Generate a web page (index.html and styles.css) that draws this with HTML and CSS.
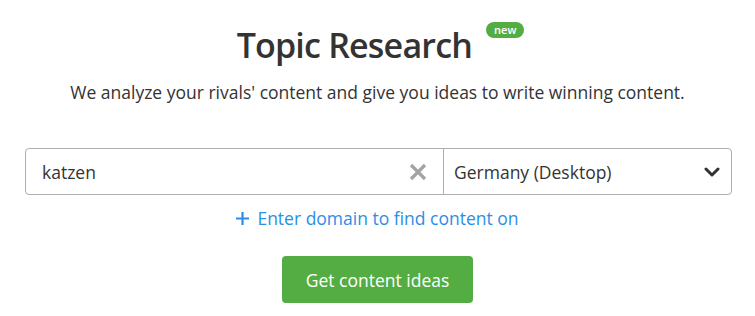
FILE: index.html
```html
<!DOCTYPE html>
<html>
<head>
<meta charset="utf-8">
<link rel="stylesheet" href="styles.css">
</head>
<body>
<main class="page">
  <div class="title-row">
    <h1 class="title">Topic Research</h1>
    <span class="badge">new</span>
  </div>
  <p class="subtitle">We analyze your rivals' content and give you ideas to write winning content.</p>
  <div class="search">
    <div class="field">
      <span class="query">katzen</span>
      <svg class="clear" width="18" height="18" viewBox="0 0 18 18"><path d="M2 2 L16 16 M16 2 L2 16" stroke="#a3a3a3" stroke-width="3.2" fill="none"/></svg>
    </div>
    <div class="select">
      <span class="db">Germany (Desktop)</span>
      <svg class="chev" width="16" height="10" viewBox="0 0 16 10"><path d="M2 2 L8 8 L14 2" stroke="#333" stroke-width="3" fill="none" stroke-linecap="round" stroke-linejoin="round"/></svg>
    </div>
  </div>
  <div class="domain">
    <svg class="plus" width="13" height="13" viewBox="0 0 13 13"><path d="M6.5 0 V13 M0 6.5 H13" stroke="#2b8ee6" stroke-width="2.2"/></svg>
    <span class="domain-text">Enter domain to find content on</span>
  </div>
  <button class="cta">Get content ideas</button>
</main>
</body>
</html>
```
FILE: styles.css
```css
html, body {
  margin: 0;
  padding: 0;
  background: #fff;
}
body {
  font-family: "Open Sans", "Noto Sans", sans-serif;
  color: #333;
}
.page {
  width: 755px;
  display: flex;
  flex-direction: column;
  align-items: center;
}
.title-row {
  margin-top: 22px;
  height: 46px;
  display: flex;
  align-items: flex-start;
  padding-left: 6px;
}
.title {
  margin: 0;
  font-size: 34px;
  font-weight: 600;
  letter-spacing: -0.8px;
  line-height: 46px;
  color: #333;
}
.badge {
  margin-left: 14px;
  height: 16px;
  line-height: 15px;
  padding: 0 8px;
  border-radius: 8px;
  background: #54ad43;
  color: #fff;
  font-size: 11px;
  font-weight: 600;
}
.subtitle {
  margin: 12px 0 0;
  font-size: 17.5px;
  line-height: 24px;
}
.search {
  margin-top: 44px;
  width: 707px;
  height: 47px;
  display: flex;
  border: 1px solid #aab0b3;
  border-radius: 4px;
  box-sizing: border-box;
  margin-left: 2px;
}
.field {
  width: 418px;
  display: flex;
  align-items: center;
  justify-content: space-between;
  padding: 0 16px 0 16px;
  box-sizing: border-box;
  border-right: 1px solid #aab0b3;
}
.query, .db {
  font-size: 17.5px;
  color: #333;
}
.select {
  flex: 1;
  display: flex;
  align-items: center;
  justify-content: space-between;
  padding: 0 11px 0 10px;
}
.domain {
  margin-top: 11px;
  display: flex;
  align-items: center;
  gap: 8px;
  color: #2b8ee6;
  font-size: 17.5px;
}
.cta {
  margin-top: 26px;
  width: 191px;
  height: 47px;
  border: none;
  border-radius: 4px;
  background: #54ad43;
  color: #fff;
  font-family: inherit;
  font-size: 17.5px;
  cursor: pointer;
}
```
